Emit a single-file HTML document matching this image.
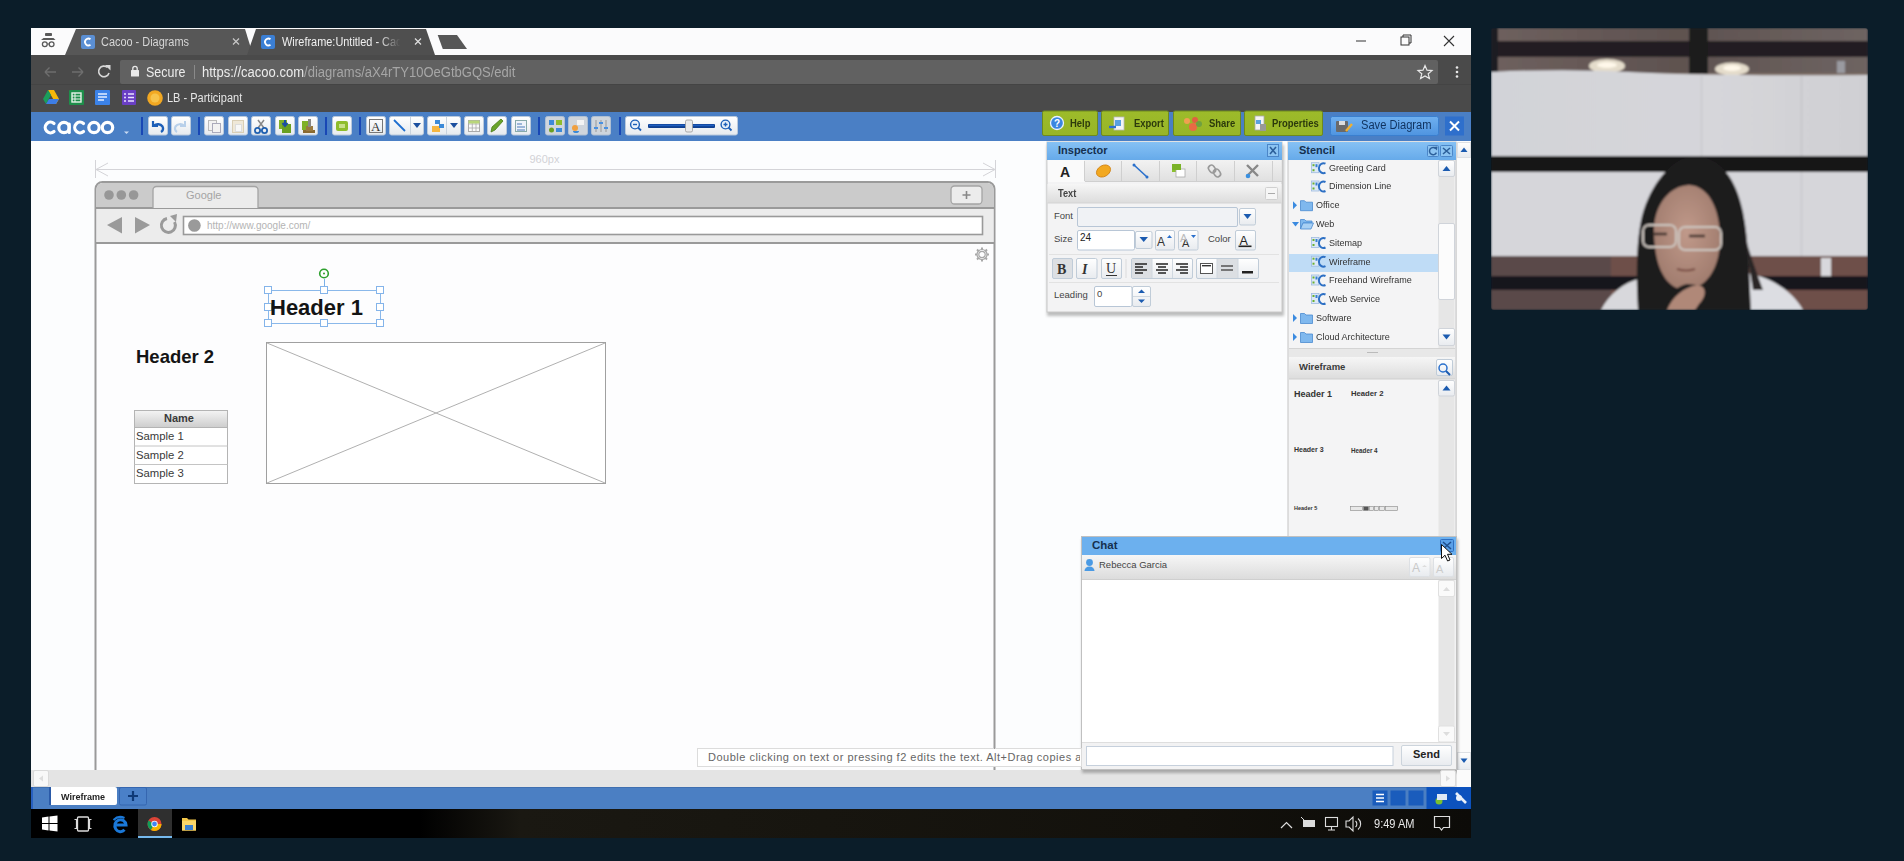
<!DOCTYPE html>
<html><head><meta charset="utf-8">
<style>
*{box-sizing:border-box;margin:0;padding:0}
html,body{width:1904px;height:861px;overflow:hidden;background:#0b1d29;font-family:"Liberation Sans",sans-serif}
.a{position:absolute}
#win{position:absolute;left:31px;top:28px;width:1440px;height:810px;background:#fff;overflow:hidden}
/* coordinates inside #win are page coords minus (31,28) -> I use page coords in a full-page layer */
#L{position:absolute;left:0;top:0;width:1904px;height:861px}
.tb{position:absolute;top:117px;width:19px;height:19px;background:linear-gradient(#fdfdfd,#e4e8ee);border:1px solid #9fb8d8;border-radius:2px}
.sep{position:absolute;top:117px;width:2px;height:19px;background:#1746b0}
.gbtn{position:absolute;top:111px;height:25px;background:#8db52a;border:1px solid #6f9420;border-top:none;border-radius:0 0 2px 2px;color:#1d2a10;font-size:11px;font-weight:bold}
.panelhdr{position:absolute;background:linear-gradient(#7fbef3,#68acec);color:#142a44;font-weight:bold;font-size:11px}
.lbl{position:absolute;font-size:9px;color:#444}
.ibtn{position:absolute;background:linear-gradient(#fff,#e9ecf0);border:1px solid #c4cfdc;border-radius:2px}
.st{position:absolute;font-size:9px;color:#333;white-space:nowrap}
</style></head><body>
<div id="L">
<!-- browser window base -->
<div class="a" style="left:31px;top:28px;width:1440px;height:27px;background:#fbfbfc"></div>
<!-- chrome tabstrip -->
<svg class="a" style="left:31px;top:28px" width="1440" height="84">
 <polygon points="34,27 45,1 214,1 222,27" fill="#575757"/>
 <polygon points="216,27 225,1 395,1 404,27" fill="#4f4f4f"/>
 <polygon points="406.7,7 426,7 436,21 411.8,21" fill="#575757"/>
 <!-- incognito icon -->
 <rect x="14" y="5" width="7" height="3" rx="0.8" fill="#5a5a5a"/>
 <polygon points="12.5,10 22.5,10 24.5,12 10,12" fill="#5a5a5a"/>
 <circle cx="13.8" cy="16.3" r="2.4" fill="none" stroke="#5a5a5a" stroke-width="1.3"/>
 <circle cx="20.6" cy="16.3" r="2.4" fill="none" stroke="#5a5a5a" stroke-width="1.3"/>
 <path d="M16.2,16 h2" stroke="#5a5a5a" stroke-width="1"/>
 <!-- favicons -->
 <rect x="50" y="7" width="14" height="14" rx="2" fill="#5b8fd3"/>
 <path d="M59.5,11.3 A3.4,3.4 0 1 0 59.5,16.7" fill="none" stroke="#fff" stroke-width="1.8"/>
 <rect x="230" y="7" width="14" height="14" rx="2" fill="#3b7fd4"/>
 <path d="M239.5,11.3 A3.4,3.4 0 1 0 239.5,16.7" fill="none" stroke="#fff" stroke-width="1.8"/>
 <!-- close x -->
 <path d="M202,10.5 l6,6 M208,10.5 l-6,6" stroke="#c8c8c8" stroke-width="1.2"/>
 <path d="M384,10.5 l6,6 M390,10.5 l-6,6" stroke="#e0e0e0" stroke-width="1.2"/>
 <!-- window controls -->
 <rect x="1325" y="12.5" width="10" height="1" fill="#333"/>
 <rect x="1370" y="9" width="8" height="8" fill="none" stroke="#333" stroke-width="1"/>
 <path d="M1372,9 v-2 h8 v8 h-2" fill="none" stroke="#333" stroke-width="1"/>
 <path d="M1413,8 l10,10 M1423,8 l-10,10" stroke="#333" stroke-width="1.1"/>
 <!-- toolbar row -->
 <rect x="0" y="27" width="1440" height="57" fill="#4a4a4a"/>
 <rect x="89" y="32" width="1318" height="24" rx="2" fill="#616161"/>
 <rect x="0" y="56" width="1440" height="1" fill="#444"/>
 <!-- back/fwd/reload -->
 <path d="M14,44 h11 M14,44 l4.5,-4.5 M14,44 l4.5,4.5" stroke="#6e6e6e" stroke-width="1.4" fill="none"/>
 <path d="M52,44 h-11 M52,44 l-4.5,-4.5 M52,44 l-4.5,4.5" stroke="#6e6e6e" stroke-width="1.4" fill="none"/>
 <path d="M76.5,39.5 A5.3,5.3 0 1 0 78,45" stroke="#d8d8d8" stroke-width="1.6" fill="none"/>
 <polygon points="74,37 79.5,37 79.5,42.5" fill="#d8d8d8"/>
 <!-- lock -->
 <rect x="100" y="42" width="8" height="6.5" rx="0.5" fill="#e8e8e8"/>
 <path d="M101.8,42.5 v-2 a2.2,2.2 0 0 1 4.4,0 v2" stroke="#e8e8e8" stroke-width="1.3" fill="none"/>
 <rect x="163" y="37" width="1" height="14" fill="#8a8a8a"/>
 <!-- star & menu -->
 <polygon points="1394,37.5 1396,42.2 1401,42.6 1397.2,45.8 1398.4,50.6 1394,48 1389.6,50.6 1390.8,45.8 1387,42.6 1392,42.2" fill="none" stroke="#e8e8e8" stroke-width="1.2"/>
 <circle cx="1426" cy="39.5" r="1.3" fill="#e8e8e8"/><circle cx="1426" cy="44" r="1.3" fill="#e8e8e8"/><circle cx="1426" cy="48.5" r="1.3" fill="#e8e8e8"/>
 <!-- bookmark icons -->
 <polygon points="17,62 23,62 28,71 25,76" fill="#f6b80b"/>
 <polygon points="17,62 12,71 15,76 20,67" fill="#1a9e5b"/>
 <polygon points="15,76 25,76 28,71 18,71" fill="#3d7de6"/>
 <rect x="38" y="62" width="15" height="15" rx="1" fill="#1e8e4a"/>
 <rect x="41" y="65" width="9" height="9" fill="none" stroke="#e8f3ea" stroke-width="1.4"/>
 <path d="M41,68 h9 M41,71 h9 M44,65 v9" stroke="#e8f3ea" stroke-width="1"/>
 <rect x="64" y="62" width="15" height="15" rx="1" fill="#3b82e8"/>
 <path d="M67,66 h9 M67,69 h9 M67,72 h6" stroke="#e3eeff" stroke-width="1.5"/>
 <rect x="91" y="62" width="14" height="15" rx="1" fill="#6a3fc4"/>
 <path d="M97,66 h6 M97,69.5 h6 M97,73 h6" stroke="#e9e2ff" stroke-width="1.5"/>
 <circle cx="94" cy="66" r="1" fill="#e9e2ff"/><circle cx="94" cy="69.5" r="1" fill="#e9e2ff"/><circle cx="94" cy="73" r="1" fill="#e9e2ff"/>
 <circle cx="124" cy="70" r="7.8" fill="#f2a822"/>
 <circle cx="124" cy="70" r="4.5" fill="#f7c34b"/>
</svg>
<div class="a" style="left:101px;top:35px;font-size:12px;color:#d6d6d6;white-space:nowrap;transform:scaleX(0.91);transform-origin:0 0">Cacoo - Diagrams</div>
<div class="a" style="left:282px;top:35px;width:130px;overflow:hidden;font-size:12px;color:#f0f0f0;white-space:nowrap;-webkit-mask-image:linear-gradient(90deg,#000 82%,transparent 100%);transform:scaleX(0.91);transform-origin:0 0">Wireframe:Untitled - Cacoo</div>
<div class="a" style="left:146px;top:64px;font-size:14px;color:#ececec;white-space:nowrap;transform:scaleX(0.89);transform-origin:0 0">Secure</div>
<div class="a" style="left:202px;top:64px;font-size:14px;color:#ececec;white-space:nowrap;transform:scaleX(0.93);transform-origin:0 0">https://cacoo.com<span style="color:#a6a6a6">/diagrams/aX4rTY10OeGtbGQS/edit</span></div>
<div class="a" style="left:167px;top:91px;font-size:12.5px;color:#e6e6e6;white-space:nowrap;transform:scaleX(0.88);transform-origin:0 0">LB - Participant</div>

<div class="a" style="left:31px;top:112px;width:1440px;height:29px;background:#4a7fc5"></div>
<div class="a" style="left:31px;top:141px;width:1440px;height:629px;background:#fcfdfe"></div>
<div class="a" style="left:31px;top:770px;width:1440px;height:17px;background:#e4e4e4"></div>
<div class="a" style="left:31px;top:787px;width:1440px;height:22px;background:#4b7fc3"></div>
<div class="a" style="left:31px;top:809px;width:1440px;height:29px;background:#050505"></div>


<!-- canvas content -->
<svg class="a" style="left:0;top:0" width="1904" height="861">
 <!-- dimension line -->
 <g stroke="#d4d4d8" stroke-width="1" fill="none">
  <path d="M95.5,160 v18 M995.5,160 v18 M96,169.5 h898"/>
  <path d="M108,163 l-12,6.5 l12,6.5 M983,163 l12,6.5 l-12,6.5"/>
 </g>
 
 <text x="529.5" y="163" font-family="Liberation Sans" font-size="11" fill="#d2d2d6">960px</text>
 <!-- mock browser -->
 <path d="M95.5,770 V189 a7,7 0 0 1 7,-7 H987.5 a7,7 0 0 1 7,7 V770" fill="#fdfdfe" stroke="#9a9a9a" stroke-width="2"/>
 <path d="M96.5,207 V189 a6,6 0 0 1 6,-6 H987.5 a6,6 0 0 1 6,6 V207 z" fill="#cbcbcb"/>
 <rect x="96.5" y="208" width="897" height="35" fill="#ececec"/>
 <rect x="96" y="207" width="898" height="2" fill="#9a9a9a"/>
 <rect x="96" y="242" width="898" height="2" fill="#9a9a9a"/>
 <circle cx="109" cy="195" r="4.8" fill="#979797"/><circle cx="121.3" cy="195" r="4.8" fill="#979797"/><circle cx="133.6" cy="195" r="4.8" fill="#979797"/>
 <path d="M153,208 V190 a3.5,3.5 0 0 1 3.5,-3.5 H254.5 a3.5,3.5 0 0 1 3.5,3.5 V208" fill="#ececec" stroke="#a4a4a4" stroke-width="1.3"/>
 <rect x="951" y="186" width="31" height="18" rx="3.5" fill="#ececec" stroke="#a4a4a4" stroke-width="1.3"/>
 <path d="M966.5,191 v8 M962.5,195 h8" stroke="#888" stroke-width="1.6"/>
 <polygon points="107,225 122,217 122,233.5" fill="#9a9a9a"/>
 <polygon points="135,217 150,225 135,233.5" fill="#9a9a9a"/>
 <path d="M174.5,222 A7,7 0 1 1 167,218.5" fill="none" stroke="#9a9a9a" stroke-width="3"/>
 <polygon points="170,216 177,214 176,222" fill="#9a9a9a"/>
 <rect x="183.5" y="216.5" width="799" height="18" fill="#fff" stroke="#9a9a9a" stroke-width="1.6"/>
 <circle cx="194.4" cy="225.5" r="6.3" fill="#9a9a9a"/>
 <text x="207" y="229" font-family="Liberation Sans" font-size="10" fill="#b4b4b4">http://www.google.com/</text>
 <text x="186" y="199" font-family="Liberation Sans" font-size="11" fill="#a4a4a4">Google</text>
 <!-- gear -->
 <g transform="translate(982,254.5)" fill="none" stroke="#a8a8a8" stroke-width="1.2">
  <circle r="3.2"/>
  <path d="M0,-7 v2.2 M0,7 v-2.2 M-7,0 h2.2 M7,0 h-2.2 M-5,-5 l1.6,1.6 M5,5 l-1.6,-1.6 M-5,5 l1.6,-1.6 M5,-5 l-1.6,1.6" stroke-width="2"/>
  <circle r="5"/>
 </g>
 <!-- image placeholder -->
 <rect x="266.5" y="342.5" width="339" height="141" fill="#fff" stroke="#a0a0a0" stroke-width="1"/>
 <path d="M267,343 L605,483 M605,343 L267,483" stroke="#b0b0b0" stroke-width="1"/>
 <!-- table -->
 <defs><linearGradient id="th" x1="0" y1="0" x2="0" y2="1"><stop offset="0" stop-color="#f4f4f4"/><stop offset="1" stop-color="#cdcdcd"/></linearGradient></defs>
 <rect x="134.5" y="410.5" width="93" height="17" fill="url(#th)" stroke="#b4b4b4"/>
 <rect x="134.5" y="427.5" width="93" height="56" fill="#fff" stroke="#b4b4b4"/>
 <path d="M134.5,446 h93 M134.5,464.5 h93" stroke="#c4c4c4" stroke-width="1"/>
 <!-- selection -->
 <path d="M324.5,279 v11" stroke="#7ab0e8" stroke-width="1"/>
 <circle cx="324" cy="273.5" r="4.3" fill="#fff" stroke="#2ea02e" stroke-width="1.6"/>
 <circle cx="324" cy="273.5" r="1" fill="#2ea02e"/>
 <rect x="268.5" y="290.5" width="112" height="33" fill="none" stroke="#8ab8ea" stroke-width="1"/>
 <g fill="#fff" stroke="#84b4ea" stroke-width="1">
  <rect x="264.5" y="286.5" width="7" height="7"/><rect x="320.5" y="286.5" width="7" height="7"/><rect x="376.5" y="286.5" width="7" height="7"/>
  <rect x="264.5" y="303.5" width="7" height="7"/><rect x="376.5" y="303.5" width="7" height="7"/>
  <rect x="264.5" y="319.5" width="7" height="7"/><rect x="320.5" y="319.5" width="7" height="7"/><rect x="376.5" y="319.5" width="7" height="7"/>
 </g>
</svg>
<div class="a" style="left:270px;top:295px;font-size:22px;font-weight:bold;color:#141414;white-space:nowrap">Header 1</div>
<div class="a" style="left:136px;top:346px;font-size:18.5px;font-weight:bold;color:#141414;white-space:nowrap">Header 2</div>
<div class="a" style="left:164px;top:412px;font-size:11px;font-weight:bold;color:#3a3a3a">Name</div>
<div class="a" style="left:136px;top:430px;font-size:11.3px;color:#3a3a3a">Sample 1</div>
<div class="a" style="left:136px;top:449px;font-size:11.3px;color:#3a3a3a">Sample 2</div>
<div class="a" style="left:136px;top:467px;font-size:11.3px;color:#3a3a3a">Sample 3</div>

<!-- panels -->
<svg class="a" style="left:0;top:0" width="1904" height="861">
 <defs>
  <linearGradient id="ph" x1="0" y1="0" x2="0" y2="1"><stop offset="0" stop-color="#86c1f4"/><stop offset="1" stop-color="#66aaea"/></linearGradient>
  <linearGradient id="sec" x1="0" y1="0" x2="0" y2="1"><stop offset="0" stop-color="#f6f6f6"/><stop offset="1" stop-color="#dcdcdc"/></linearGradient>
  <linearGradient id="btn" x1="0" y1="0" x2="0" y2="1"><stop offset="0" stop-color="#ffffff"/><stop offset="1" stop-color="#e8ebef"/></linearGradient>
  <linearGradient id="tab" x1="0" y1="0" x2="0" y2="1"><stop offset="0" stop-color="#f2f2f2"/><stop offset="1" stop-color="#e0e0e0"/></linearGradient>
  <filter id="sh" x="-5%" y="-5%" width="110%" height="115%"><feGaussianBlur stdDeviation="1.5"/></filter>
 </defs>
 <!-- ===== Inspector ===== -->
 <rect x="1047" y="145" width="237" height="171" fill="#888" opacity="0.55" filter="url(#sh)"/>
 <rect x="1047" y="142" width="235" height="170" fill="#f3f3f4" stroke="#c8c8c8" stroke-width="1"/>
 <rect x="1047" y="142" width="235" height="18" fill="url(#ph)"/>
 <rect x="1267.5" y="144.5" width="11" height="12" fill="#8cc4f2" stroke="#4b86c8" stroke-width="1"/>
 <path d="M1270,147 l6,7 M1276,147 l-6,7" stroke="#2c5f9a" stroke-width="1.6"/>
 <!-- tabs -->
 <rect x="1047.5" y="160" width="234" height="21" fill="url(#tab)"/>
 <rect x="1048" y="160" width="36" height="22" fill="#fafafa"/>
 <g fill="#cfcfcf"><rect x="1084" y="161" width="1" height="20"/><rect x="1121" y="161" width="1" height="20"/><rect x="1159" y="161" width="1" height="20"/><rect x="1196" y="161" width="1" height="20"/><rect x="1234" y="161" width="1" height="20"/><rect x="1272" y="161" width="1" height="20"/></g>
 <rect x="1085" y="181" width="197" height="1" fill="#cfcfcf"/>
 <text x="1060" y="177" font-family="Liberation Sans" font-weight="bold" font-size="14" fill="#222">A</text>
 <ellipse cx="1103.5" cy="171" rx="7.5" ry="5.5" transform="rotate(-30 1103.5 171)" fill="#f2a820" stroke="#d08010" stroke-width="0.8"/>
 <path d="M1134,165 l13,12" stroke="#2a70cc" stroke-width="1.6"/>
 <circle cx="1134" cy="165" r="1.5" fill="#2a70cc"/><circle cx="1147" cy="177" r="1.5" fill="#2a70cc"/>
 <rect x="1172" y="164" width="9" height="8" fill="#8cc030"/>
 <rect x="1176" y="169" width="9" height="8" fill="#fff" stroke="#aaa" stroke-width="0.8"/>
 <rect x="1172" y="164" width="9" height="6" fill="#7ab228"/>
 <g fill="none" stroke="#9a9a9a" stroke-width="1.6"><rect x="1209" y="165" width="6" height="8" rx="3" transform="rotate(-35 1212 169)"/><rect x="1214" y="169" width="6" height="8" rx="3" transform="rotate(-35 1217 173)"/></g>
 <path d="M1247,165 l11,11 M1258,165 l-11,11" stroke="#888" stroke-width="2.4"/>
 <circle cx="1248" cy="176" r="2.3" fill="#3a90e0"/>
 <!-- section Text -->
 <rect x="1047.5" y="184" width="234" height="19" fill="url(#sec)"/>
 <rect x="1047.5" y="202.5" width="234" height="1" fill="#d4d4d4"/>
 <rect x="1265.5" y="187.5" width="12" height="12" rx="1" fill="#f6f6f6" stroke="#d0d0d0"/>
 <rect x="1268" y="193" width="7" height="1" fill="#aaa"/>
 <!-- inputs -->
 <rect x="1077.5" y="207.5" width="160" height="19" rx="1.5" fill="#f0f2f5" stroke="#b8c6d6"/>
 <rect x="1239.5" y="208.5" width="16" height="16.5" rx="1.5" fill="url(#btn)" stroke="#c0ccd8"/>
 <polygon points="1243.5,214 1251.5,214 1247.5,219" fill="#1b5bb0"/>
 <rect x="1077.5" y="230.5" width="57" height="19.5" rx="1.5" fill="#fff" stroke="#b8c6d6"/>
 <rect x="1135.5" y="231.5" width="16.5" height="17" rx="1.5" fill="url(#btn)" stroke="#c0ccd8"/>
 <polygon points="1139.5,237 1148,237 1143.7,242" fill="#1b5bb0"/>
 <rect x="1155.5" y="230.5" width="19" height="19.5" rx="1.5" fill="url(#btn)" stroke="#c0ccd8"/>
 <rect x="1178.5" y="230.5" width="19.5" height="19.5" rx="1.5" fill="url(#btn)" stroke="#c0ccd8"/>
 <text x="1157" y="246" font-family="Liberation Sans" font-size="12" fill="#333">A</text>
 <polygon points="1167,238 1172,238 1169.5,235" fill="#2a70cc"/>
 <text x="1182" y="247" font-family="Liberation Sans" font-size="11" fill="#333">A</text>
 <text x="1180" y="242" font-family="Liberation Sans" font-size="11" fill="#bbb">A</text>
 <polygon points="1191,235 1196,235 1193.5,238" fill="#2a70cc"/>
 <rect x="1235.5" y="230.5" width="20" height="19.5" rx="1.5" fill="url(#btn)" stroke="#c0ccd8"/>
 <text x="1239.5" y="245" font-family="Liberation Sans" font-size="12.5" fill="#222">A</text>
 <rect x="1238.5" y="245.5" width="13" height="1.6" fill="#222"/>
 <rect x="1049" y="254" width="230" height="1" fill="#e2e2e2"/>
 <!-- format row -->
 <rect x="1052.5" y="258.5" width="20" height="20" rx="1.5" fill="#dcdfe3" stroke="#c0ccd8"/>
 <rect x="1076.5" y="258.5" width="20.5" height="20" rx="1.5" fill="url(#btn)" stroke="#c0ccd8"/>
 <rect x="1101.5" y="258.5" width="20" height="20" rx="1.5" fill="url(#btn)" stroke="#c0ccd8"/>
 <text x="1057" y="274" font-family="Liberation Serif" font-weight="bold" font-size="14" fill="#333">B</text>
 <text x="1082" y="274" font-family="Liberation Serif" font-style="italic" font-weight="bold" font-size="14" fill="#333">I</text>
 <text x="1106" y="273" font-family="Liberation Serif" font-size="14" fill="#333">U</text>
 <rect x="1106" y="275" width="11" height="1" fill="#333"/>
 <rect x="1125.5" y="259" width="1" height="19" fill="#dcdcdc"/>
 <rect x="1131.5" y="258.5" width="61" height="20" rx="1.5" fill="url(#btn)" stroke="#c0ccd8"/>
 <rect x="1132" y="259" width="20" height="19" fill="#dcdfe3"/>
 <rect x="1151.5" y="259" width="1" height="19" fill="#d0d8e0"/><rect x="1172" y="259" width="1" height="19" fill="#d0d8e0"/>
 <path d="M1135,264 h12 M1135,267 h8 M1135,270 h12 M1135,273 h8" stroke="#222" stroke-width="1.4"/>
 <path d="M1156,264 h12 M1158,267 h8 M1156,270 h12 M1158,273 h8" stroke="#222" stroke-width="1.4"/>
 <path d="M1176,264 h12 M1180,267 h8 M1176,270 h12 M1180,273 h8" stroke="#222" stroke-width="1.4"/>
 <rect x="1196.5" y="258.5" width="62" height="20" rx="1.5" fill="url(#btn)" stroke="#c0ccd8"/>
 <rect x="1217" y="259" width="21" height="19" fill="#dcdfe3"/>
 <rect x="1216.5" y="259" width="1" height="19" fill="#d0d8e0"/><rect x="1237.5" y="259" width="1" height="19" fill="#d0d8e0"/>
 <rect x="1200.5" y="263.5" width="12" height="10" fill="#fff" stroke="#555"/>
 <rect x="1202" y="265" width="9" height="1.4" fill="#333"/>
 <path d="M1221,266 h12 M1221,270 h12" stroke="#555" stroke-width="1.3"/>
 <rect x="1242" y="271" width="11" height="2.5" fill="#222"/>
 <rect x="1049" y="282" width="230" height="1" fill="#e2e2e2"/>
 <!-- leading -->
 <rect x="1094.5" y="286.5" width="37.5" height="20" rx="1.5" fill="#fff" stroke="#b8c6d6"/>
 <rect x="1132.5" y="286.5" width="18" height="20" rx="1.5" fill="url(#btn)" stroke="#c0ccd8"/>
 <rect x="1133" y="296" width="17" height="1" fill="#d0d8e0"/>
 <polygon points="1138,293 1145,293 1141.5,289.5" fill="#1b5bb0"/>
 <polygon points="1138,299.5 1145,299.5 1141.5,303" fill="#1b5bb0"/>

 <!-- ===== Stencil ===== -->
 <rect x="1288" y="142" width="168" height="395" fill="#f4f4f5" stroke="#c4c4c4"/>
 <rect x="1288" y="142" width="168" height="18" fill="url(#ph)"/>
 <rect x="1427.5" y="145.5" width="11" height="11" rx="1" fill="#8cc4f2" stroke="#4b86c8"/>
 <path d="M1435.8,148.8 a3.6,3.6 0 1 0 0.6,3.8" fill="none" stroke="#2c5f9a" stroke-width="1.5"/><polygon points="1433.5,147 1437.5,146.5 1437,150.5" fill="#2c5f9a"/>
 <rect x="1440.5" y="145.5" width="12" height="11" rx="1" fill="#8cc4f2" stroke="#4b86c8"/>
 <path d="M1443,148 l7,6 M1450,148 l-7,6" stroke="#2c5f9a" stroke-width="1.6"/>
 <rect x="1289" y="254" width="149.5" height="18" fill="#bfdcf6"/>
 <!-- stencil scrollbar -->
 <rect x="1438.5" y="160" width="16" height="188" fill="#e6e6e6"/>
 <rect x="1438.5" y="160.5" width="16" height="16" rx="1.5" fill="url(#btn)" stroke="#d0d4da"/>
 <polygon points="1442.5,171 1450.5,171 1446.5,166" fill="#1b5bb0"/>
 <rect x="1438.5" y="223.5" width="16" height="76" rx="1.5" fill="#fcfcfc" stroke="#d0d4da"/>
 <rect x="1438.5" y="328.5" width="16" height="17" rx="1.5" fill="url(#btn)" stroke="#d0d4da"/>
 <polygon points="1442.5,334.5 1450.5,334.5 1446.5,339.5" fill="#1b5bb0"/>
 <rect x="1289" y="348" width="166" height="1" fill="#d4d4d4"/>
 <rect x="1289" y="349" width="166" height="8" fill="#e8e8e8"/>
 <rect x="1367" y="352" width="11" height="1" fill="#bbb"/>
 <!-- wireframe header -->
 <rect x="1289" y="357" width="166" height="22" fill="url(#sec)"/>
 <rect x="1289" y="378.5" width="166" height="1" fill="#d0d0d0"/>
 <rect x="1436.5" y="359.5" width="16" height="16" rx="1.5" fill="url(#btn)" stroke="#c0ccd8"/>
 <circle cx="1443" cy="368" r="4" fill="none" stroke="#2a70cc" stroke-width="1.5"/>
 <path d="M1446,371 l4,4" stroke="#1b5bb0" stroke-width="2"/>
 <rect x="1438.5" y="380" width="16" height="157" fill="#e6e6e6"/>
 <rect x="1438.5" y="380.5" width="16" height="15.5" rx="1.5" fill="url(#btn)" stroke="#d0d4da"/>
 <polygon points="1442.5,390.5 1450.5,390.5 1446.5,385.5" fill="#1b5bb0"/>
 <!-- pagination thumbnail -->
 <g fill="#e8e8e8" stroke="#888" stroke-width="0.6"><rect x="1350.5" y="506.5" width="12" height="4"/><rect x="1363.5" y="506.5" width="5" height="4" fill="#555"/><rect x="1369.5" y="506.5" width="4" height="4"/><rect x="1374.5" y="506.5" width="4" height="4"/><rect x="1379.5" y="506.5" width="5" height="4"/><rect x="1385.5" y="506.5" width="12" height="4"/></g>
 <!-- outer right scrollbar -->
 <rect x="1457" y="142" width="14" height="628" fill="#fbfbfb"/>
 <rect x="1456" y="142" width="1" height="628" fill="#d8d8d8"/>
 <rect x="1457.5" y="142.5" width="13" height="15" fill="url(#btn)" stroke="#dde0e4"/>
 <polygon points="1460.5,152 1467.5,152 1464,147.5" fill="#1b5bb0"/>
 <rect x="1457.5" y="752.5" width="13" height="17" fill="url(#btn)" stroke="#dde0e4"/>
 <polygon points="1460.5,758.5 1467.5,758.5 1464,763" fill="#1b5bb0"/>

 <!-- ===== Chat ===== -->
 <rect x="1082" y="539" width="376" height="234" fill="#777" opacity="0.55" filter="url(#sh)"/>
 <rect x="1081.5" y="536.5" width="375" height="233" fill="#f2f2f3" stroke="#c0c0c0"/>
 <rect x="1082" y="537" width="374" height="18" fill="#6cb0ee"/>
 <rect x="1440.5" y="539.5" width="13" height="12" rx="1" fill="#5aa0e8" stroke="#2f6fc0"/>
 <path d="M1443,542 l8,7 M1451,542 l-8,7" stroke="#1f4f8f" stroke-width="1.6"/>
 <rect x="1082" y="555" width="374" height="24" fill="url(#sec)"/>
 <rect x="1082" y="579" width="374" height="1" fill="#cfcfcf"/>
 <rect x="1409.5" y="557.5" width="20.5" height="19" rx="1.5" fill="url(#btn)" stroke="#dde0e4"/>
 <rect x="1433.5" y="557.5" width="20" height="19" rx="1.5" fill="url(#btn)" stroke="#dde0e4"/>
 <text x="1412" y="572" font-family="Liberation Sans" font-size="12" fill="#c8c8c8">A</text>
 <polygon points="1422,567 1427,567 1424.5,565" fill="#ddd"/>
 <text x="1436" y="573" font-family="Liberation Sans" font-size="11" fill="#ccc">A</text>
 <circle cx="1089.5" cy="562.5" r="3.4" fill="#4a9ae4"/>
 <path d="M1084.5,571 a5,4.5 0 0 1 10,0 z" fill="#4a9ae4"/>
 <rect x="1082" y="580" width="357" height="162" fill="#fff"/>
 <rect x="1438.5" y="580" width="16" height="162" fill="#e6e6e6"/>
 <rect x="1438.5" y="580.5" width="16" height="16" rx="1.5" fill="#fafafa" stroke="#e0e0e0"/>
 <polygon points="1443,591 1450,591 1446.5,587" fill="#ddd"/>
 <rect x="1438.5" y="726" width="16" height="16" rx="1.5" fill="#fafafa" stroke="#e0e0e0"/>
 <polygon points="1443,732 1450,732 1446.5,736" fill="#ddd"/>
 <rect x="1082" y="742" width="374" height="1" fill="#dedede"/>
 <rect x="1086.5" y="746.5" width="306.5" height="19" fill="#fff" stroke="#c6d0dc"/>
 <rect x="1401.5" y="745.5" width="50" height="20" rx="1.5" fill="url(#btn)" stroke="#ccd4dc"/>

 <!-- tooltip -->
 <rect x="697.5" y="748.5" width="384" height="18" fill="#fff" stroke="#dcdcdc"/>
 <rect x="994" y="748" width="1" height="1" fill="#9a9a9a"/>
 <!-- canvas bottom scrollbar buttons -->
 <rect x="33.5" y="770.5" width="15" height="16" rx="1.5" fill="#f8f8f8" stroke="#dadada"/>
 <polygon points="43,775.5 43,781.5 39,778.5" fill="#ddd"/>
 <rect x="1440.5" y="770.5" width="15" height="16" rx="1.5" fill="#f8f8f8" stroke="#dadada"/>
 <polygon points="1446,775.5 1446,781.5 1450,778.5" fill="#ddd"/>
 <rect x="1457" y="770" width="14" height="17" fill="#fbfbfb"/>
</svg>
<div class="a" style="left:1058px;top:144px;font-size:11px;font-weight:bold;color:#15304f">Inspector</div>
<div class="a" style="left:1058px;top:188px;font-size:10px;font-weight:bold;color:#444;transform:scaleX(0.92);transform-origin:0 0">Text</div>
<div class="a" style="left:1054px;top:210px;font-size:9.5px;color:#444">Font</div>
<div class="a" style="left:1054px;top:233px;font-size:9.5px;color:#444">Size</div>
<div class="a" style="left:1080px;top:232px;font-size:10px;color:#222">24</div>
<div class="a" style="left:1208px;top:233px;font-size:9.5px;color:#444">Color</div>
<div class="a" style="left:1054px;top:289px;font-size:9.5px;color:#444">Leading</div>
<div class="a" style="left:1097px;top:288px;font-size:9.5px;color:#444">0</div>
<div class="a" style="left:1299px;top:144px;font-size:11px;font-weight:bold;color:#15304f">Stencil</div>
<div class="a" style="left:1299px;top:361px;font-size:9.5px;font-weight:bold;color:#3a3a3a">Wireframe</div>
<div class="a" style="left:1092px;top:539px;font-size:11.5px;font-weight:bold;color:#15304f">Chat</div>
<div class="a" style="left:1099px;top:559px;font-size:9.5px;color:#444">Rebecca Garcia</div>
<div class="a" style="left:1413px;top:748px;font-size:11px;font-weight:bold;color:#222">Send</div>
<div class="a" style="left:708px;top:751px;font-size:11px;color:#666;white-space:nowrap;width:372px;overflow:hidden;letter-spacing:0.5px">Double clicking on text or pressing f2 edits the text. Alt+Drag copies a shape.</div>
<div class="a" style="left:1294px;top:389px;font-size:9px;font-weight:bold;color:#333">Header 1</div>
<div class="a" style="left:1351px;top:389px;font-size:7.7px;font-weight:bold;color:#333">Header 2</div>
<div class="a" style="left:1294px;top:446px;font-size:7px;font-weight:bold;color:#333">Header 3</div>
<div class="a" style="left:1351px;top:447px;font-size:6.3px;font-weight:bold;color:#333">Header 4</div>
<div class="a" style="left:1294px;top:505px;font-size:5.5px;font-weight:bold;color:#333">Header 5</div>

<!-- stencil list -->
<svg class="a" style="left:0;top:0" width="1904" height="861">
<rect x="1311.5" y="162.7" width="7.5" height="10" fill="#dce8f6" stroke="#9dbbe0" stroke-width="0.8"/>
<rect x="1312.5" y="164.2" width="2" height="2" fill="#6ab030"/><rect x="1312.5" y="169.2" width="2" height="2" fill="#6ab030"/><rect x="1315.5" y="164.2" width="2" height="3" fill="#3a80d0"/>
<path d="M1325.5,163.7 a4.6,5 0 1 0 0,9" fill="none" stroke="#2c6fc4" stroke-width="2"/>
<rect x="1311.5" y="181.0" width="7.5" height="10" fill="#dce8f6" stroke="#9dbbe0" stroke-width="0.8"/>
<rect x="1312.5" y="182.5" width="2" height="2" fill="#6ab030"/><rect x="1312.5" y="187.5" width="2" height="2" fill="#6ab030"/><rect x="1315.5" y="182.5" width="2" height="3" fill="#3a80d0"/>
<path d="M1325.5,182.0 a4.6,5 0 1 0 0,9" fill="none" stroke="#2c6fc4" stroke-width="2"/>
<polygon points="1293,201.2 1297,205.2 1293,209.2" fill="#3a8ae0"/>
<path d="M1300.5,200.7 h4 l1.5,1.5 h6.5 v8.5 h-12 z" fill="#7fb8ee" stroke="#4a8ad0" stroke-width="0.8"/>
<polygon points="1292,222 1299,222 1295.5,226.5" fill="#3a8ae0"/>
<path d="M1300.5,219.5 h4 l1.5,1.5 h6 v2 h-9 l-2.5,6 z" fill="#7fb8ee" stroke="#4a8ad0" stroke-width="0.8"/><path d="M1303,223 h10.5 l-2.5,6 h-10.5 z" fill="#a8d0f4" stroke="#4a8ad0" stroke-width="0.8"/>
<rect x="1311.5" y="237.5" width="7.5" height="10" fill="#dce8f6" stroke="#9dbbe0" stroke-width="0.8"/>
<rect x="1312.5" y="239" width="2" height="2" fill="#6ab030"/><rect x="1312.5" y="244" width="2" height="2" fill="#6ab030"/><rect x="1315.5" y="239" width="2" height="3" fill="#3a80d0"/>
<path d="M1325.5,238.5 a4.6,5 0 1 0 0,9" fill="none" stroke="#2c6fc4" stroke-width="2"/>
<rect x="1311.5" y="256.2" width="7.5" height="10" fill="#dce8f6" stroke="#9dbbe0" stroke-width="0.8"/>
<rect x="1312.5" y="257.7" width="2" height="2" fill="#6ab030"/><rect x="1312.5" y="262.7" width="2" height="2" fill="#6ab030"/><rect x="1315.5" y="257.7" width="2" height="3" fill="#3a80d0"/>
<path d="M1325.5,257.2 a4.6,5 0 1 0 0,9" fill="none" stroke="#2c6fc4" stroke-width="2"/>
<rect x="1311.5" y="275.0" width="7.5" height="10" fill="#dce8f6" stroke="#9dbbe0" stroke-width="0.8"/>
<rect x="1312.5" y="276.5" width="2" height="2" fill="#6ab030"/><rect x="1312.5" y="281.5" width="2" height="2" fill="#6ab030"/><rect x="1315.5" y="276.5" width="2" height="3" fill="#3a80d0"/>
<path d="M1325.5,276.0 a4.6,5 0 1 0 0,9" fill="none" stroke="#2c6fc4" stroke-width="2"/>
<rect x="1311.5" y="293.5" width="7.5" height="10" fill="#dce8f6" stroke="#9dbbe0" stroke-width="0.8"/>
<rect x="1312.5" y="295" width="2" height="2" fill="#6ab030"/><rect x="1312.5" y="300" width="2" height="2" fill="#6ab030"/><rect x="1315.5" y="295" width="2" height="3" fill="#3a80d0"/>
<path d="M1325.5,294.5 a4.6,5 0 1 0 0,9" fill="none" stroke="#2c6fc4" stroke-width="2"/>
<polygon points="1293,314 1297,318 1293,322" fill="#3a8ae0"/>
<path d="M1300.5,313.5 h4 l1.5,1.5 h6.5 v8.5 h-12 z" fill="#7fb8ee" stroke="#4a8ad0" stroke-width="0.8"/>
<polygon points="1293,333 1297,337 1293,341" fill="#3a8ae0"/>
<path d="M1300.5,332.5 h4 l1.5,1.5 h6.5 v8.5 h-12 z" fill="#7fb8ee" stroke="#4a8ad0" stroke-width="0.8"/>
</svg>
<div class="a" style="left:1329px;top:162px;font-size:9.5px;color:#333;white-space:nowrap;transform:scaleX(0.95);transform-origin:0 0">Greeting Card</div>
<div class="a" style="left:1329px;top:180px;font-size:9.5px;color:#333;white-space:nowrap;transform:scaleX(0.95);transform-origin:0 0">Dimension Line</div>
<div class="a" style="left:1316px;top:199px;font-size:9.5px;color:#333;white-space:nowrap;transform:scaleX(0.95);transform-origin:0 0">Office</div>
<div class="a" style="left:1316px;top:218px;font-size:9.5px;color:#333;white-space:nowrap;transform:scaleX(0.95);transform-origin:0 0">Web</div>
<div class="a" style="left:1329px;top:237px;font-size:9.5px;color:#333;white-space:nowrap;transform:scaleX(0.95);transform-origin:0 0">Sitemap</div>
<div class="a" style="left:1329px;top:256px;font-size:9.5px;color:#333;white-space:nowrap;transform:scaleX(0.95);transform-origin:0 0">Wireframe</div>
<div class="a" style="left:1329px;top:274px;font-size:9.5px;color:#333;white-space:nowrap;transform:scaleX(0.95);transform-origin:0 0">Freehand Wireframe</div>
<div class="a" style="left:1329px;top:293px;font-size:9.5px;color:#333;white-space:nowrap;transform:scaleX(0.95);transform-origin:0 0">Web Service</div>
<div class="a" style="left:1316px;top:312px;font-size:9.5px;color:#333;white-space:nowrap;transform:scaleX(0.95);transform-origin:0 0">Software</div>
<div class="a" style="left:1316px;top:331px;font-size:9.5px;color:#333;white-space:nowrap;transform:scaleX(0.95);transform-origin:0 0">Cloud Architecture</div>

<!-- bottom bars -->
<svg class="a" style="left:0;top:0" width="1904" height="861">
 <rect x="31" y="787" width="1440" height="1" fill="#3f6fb0"/>
 <rect x="49" y="787" width="68" height="18" rx="2" fill="#fff"/>
 <rect x="49" y="787" width="2" height="18" fill="#2a5aa8"/>
 <rect x="119.5" y="787.5" width="27" height="17.5" rx="1.5" fill="#4a80c8" stroke="#3566b0"/>
 <path d="M133,791 v10 M128,796 h10" stroke="#0f3a78" stroke-width="2.2"/>
 <rect x="31" y="787" width="2" height="22" fill="#2860c0"/>
 <!-- right bottom buttons -->
 <rect x="1372.5" y="790.5" width="15" height="15" fill="#1a5cbc"/>
 <path d="M1376,794.5 h8 M1376,798 h8 M1376,801.5 h8" stroke="#fff" stroke-width="1.4"/>
 <rect x="1390.5" y="790.5" width="15" height="15" fill="#1a5cbc"/>
 <rect x="1408.5" y="790.5" width="15" height="15" fill="#1a5cbc"/>
 <rect x="1426.5" y="787" width="44.5" height="22" fill="#0c52be"/>
 <circle cx="1439" cy="801" r="3.5" fill="#7ac030"/>
 <rect x="1437" y="794" width="10" height="6" fill="#dfe8f4"/>
 <path d="M1456,793 l10,10" stroke="#e8f0fa" stroke-width="2.6"/>
 <circle cx="1459" cy="798" r="3" fill="#e8f0fa"/>
 <!-- taskbar -->
 <defs><linearGradient id="tbg" x1="0" y1="0" x2="1" y2="0"><stop offset="0" stop-color="#000"/><stop offset="0.27" stop-color="#000"/><stop offset="0.34" stop-color="#1a1812"/><stop offset="0.55" stop-color="#17150f"/><stop offset="0.8" stop-color="#13110c"/><stop offset="1" stop-color="#0c0b08"/></linearGradient></defs>
 <rect x="31" y="809" width="1440" height="29" fill="url(#tbg)"/>
 <g fill="#fff">
  <polygon points="42,817.5 48.5,816.6 48.5,823 42,823"/>
  <polygon points="49.5,816.5 57.5,815.5 57.5,823 49.5,823"/>
  <polygon points="42,824 48.5,824 48.5,830.5 42,829.6"/>
  <polygon points="49.5,824 57.5,824 57.5,831.5 49.5,830.6"/>
 </g>
 <rect x="77.5" y="817" width="11" height="14" rx="1" fill="none" stroke="#dcdcdc" stroke-width="1.3"/>
 <path d="M74.5,819.5 h2 v9 h-2 M91.5,819.5 h-2 v9 h2" fill="none" stroke="#dcdcdc" stroke-width="1.2"/>
 <path d="M115.5,825 h10.5 a5.6,6 0 1 0 -1.5,4.8" fill="none" stroke="#1a78d8" stroke-width="3"/><path d="M113.5,820 q5,-5 11,-2" fill="none" stroke="#1a78d8" stroke-width="2"/>
 <rect x="138" y="809" width="34" height="29" fill="#2f2f2f"/>
 <rect x="138" y="836" width="34" height="2" fill="#76b9ed"/>
 <circle cx="154.5" cy="824" r="7" fill="#db4437"/>
 <path d="M154.5,824 L148.4,820.5 A7,7 0 0 0 151,830 z" fill="#0f9d58"/>
 <path d="M154.5,824 L151,830 A7,7 0 0 0 161.5,824 z" fill="#f4b400"/>
 <circle cx="154.5" cy="824" r="3.2" fill="#fff"/><circle cx="154.5" cy="824" r="2.4" fill="#4285f4"/>
 <path d="M182,818 h5 l1.5,1.5 h7.5 v11 h-14 z" fill="#f4c84a"/>
 <rect x="182" y="821" width="14" height="9.5" fill="#fad66a"/>
 <rect x="185" y="825" width="8" height="5" fill="#3a7fcf"/>
 <!-- tray -->
 <path d="M1281,828 l5.5,-5.5 l5.5,5.5" fill="none" stroke="#ddd" stroke-width="1.2"/>
 <rect x="1303" y="820" width="12" height="7" fill="#ddd"/>
 <path d="M1301,817 l3,3" stroke="#ddd" stroke-width="1"/>
 <rect x="1325.5" y="817.5" width="12" height="9" fill="none" stroke="#ddd" stroke-width="1.1"/>
 <path d="M1331.5,826.5 v3 M1328,830 h7" stroke="#ddd" stroke-width="1.1"/>
 <path d="M1346,821 h3 l4,-4 v14 l-4,-4 h-3 z" fill="none" stroke="#ddd" stroke-width="1.1"/>
 <path d="M1355.5,821 a4,4 0 0 1 0,6 M1358,818.5 a7,7 0 0 1 0,11" fill="none" stroke="#ddd" stroke-width="1.1"/>
 <path d="M1434.5,816.5 h15 v11 h-6 l-2,2.5 l-2,-2.5 h-5 z" fill="none" stroke="#ddd" stroke-width="1.2"/>
</svg>
<div class="a" style="left:61px;top:791px;font-size:9.5px;font-weight:bold;color:#222;transform:scaleX(0.95);transform-origin:0 0">Wireframe</div>
<div class="a" style="left:1374px;top:817px;font-size:12px;color:#e8e8e8;white-space:nowrap;transform:scaleX(0.92);transform-origin:0 0">9:49 AM</div>

<!-- webcam -->
<svg class="a" style="left:1491px;top:28px" width="377" height="282" viewBox="0 0 377 282">
 <defs>
  <clipPath id="camclip"><rect x="0" y="0" width="377" height="282" rx="3"/></clipPath>
  <filter id="bl"><feGaussianBlur stdDeviation="0.9"/></filter>
  <filter id="bl2"><feGaussianBlur stdDeviation="2.5"/></filter>
  <linearGradient id="pan1" x1="0" y1="0" x2="1" y2="0"><stop offset="0" stop-color="#d2d3d8"/><stop offset="0.6" stop-color="#d6d6da"/><stop offset="1" stop-color="#cfcfd3"/></linearGradient>
  <linearGradient id="ceil" x1="0" y1="0" x2="1" y2="0"><stop offset="0" stop-color="#6e605e"/><stop offset="0.5" stop-color="#5e5250"/><stop offset="1" stop-color="#6e6462"/></linearGradient>
  <radialGradient id="face" cx="0.5" cy="0.45" r="0.6"><stop offset="0" stop-color="#c0998a"/><stop offset="1" stop-color="#9e7a6c"/></radialGradient>
 </defs>
 <g clip-path="url(#camclip)" filter="url(#bl)">
  <rect width="377" height="282" fill="#7a6a62"/>
  <rect width="377" height="45" fill="url(#ceil)"/>
  <rect x="0" y="13" width="377" height="16" fill="#221e20"/>
  <rect x="198" y="0" width="19" height="46" fill="#1a1a1e"/>
  <rect x="0" y="0" width="7" height="282" fill="#1e1e22"/>
  <ellipse cx="116" cy="38" rx="18" ry="7" fill="#e4dccb"/>
  <ellipse cx="116" cy="37" rx="10" ry="3" fill="#fff8ea"/>
  <ellipse cx="241" cy="41" rx="17" ry="6.5" fill="#e4dccb"/>
  <ellipse cx="241" cy="40" rx="9" ry="3" fill="#fff8ea"/>
  <rect x="346" y="33" width="8" height="12" fill="#9a9aa0"/>
  <path d="M0,44 Q80,40 160,45 Q230,48 377,47 V128 H0 Z" fill="url(#pan1)"/>
  <rect x="210" y="46" width="1" height="82" fill="#c4c4c8"/>
  <rect x="310" y="48" width="1" height="80" fill="#c0c0c4"/>
  <rect x="0" y="128" width="377" height="16" fill="#161618"/>
  <rect x="0" y="144" width="377" height="84" fill="#d6d6da"/>
  <rect x="310" y="144" width="1" height="84" fill="#c4c4c8"/>
  <rect x="0" y="228" width="377" height="54" fill="#6e5048"/>
  <rect x="0" y="228" width="120" height="54" fill="#5a4a48"/>
  <rect x="0" y="248" width="377" height="14" fill="#18181a"/>
  <rect x="330" y="230" width="10" height="18" fill="#d8d8dc"/>
  <!-- person -->
  <path d="M110,282 C118,266 132,255 150,250 L150,282 Z" fill="#d8d8dc"/>
  <path d="M256,245 C282,250 302,264 312,282 L256,282 Z" fill="#dcdde2"/>
  <path d="M147,282 C145,250 145,214 151,188 C159,158 180,129 204,128 C229,129 245,150 252,184 C258,214 258,248 260,282 Z" fill="#1f1c1e"/>
  <path d="M252,200 C258,225 266,245 272,262 L262,262 Z" fill="#2a2628"/>
  <path d="M163,206 C162,178 178,158 198,157 C218,158 230,182 229,214 C228,242 214,261 195,262 C175,261 164,240 163,206 Z" fill="url(#face)"/>
  <path d="M206,156 C226,162 236,190 234,236 L244,236 C246,190 234,158 206,150 Z" fill="#1f1c1e"/>
  <path d="M170,282 C176,266 186,258 196,256 L214,258 C206,266 200,274 198,282 Z" fill="#1f1c1e"/>
  <path d="M176,282 C182,268 192,260 206,257 C216,258 216,268 208,276 L204,282 Z" fill="#b08878"/>
  <rect x="152" y="197" width="33" height="22" rx="6" fill="none" stroke="#cdc6c0" stroke-width="2"/>
  <rect x="188" y="199" width="42" height="23" rx="6" fill="none" stroke="#cdc6c0" stroke-width="2"/>
  <path d="M162,206 h14 M198,208 h16" stroke="#3e2e2a" stroke-width="2.4"/>
  <path d="M186,241 q9,3 18,0" stroke="#7a4e44" stroke-width="2" fill="none"/>
 </g>
</svg>
<!-- cacoo toolbar -->
<svg class="a" style="left:0;top:0" width="1904" height="150">
 <defs>
  <linearGradient id="bg1" x1="0" y1="0" x2="0" y2="1"><stop offset="0" stop-color="#ffffff"/><stop offset="1" stop-color="#e6eaee"/></linearGradient>
  <linearGradient id="gg" x1="0" y1="0" x2="0" y2="1"><stop offset="0" stop-color="#9dbb2a"/><stop offset="1" stop-color="#97b527"/></linearGradient>
  <linearGradient id="sg" x1="0" y1="0" x2="0" y2="1"><stop offset="0" stop-color="#6fb0f0"/><stop offset="1" stop-color="#4f94e0"/></linearGradient>
 </defs>
 <!-- cacoo logo -->
 <g fill="none" stroke="#fff" stroke-width="3.2" stroke-linecap="round">
  <path d="M54,123.5 A5.3,5.3 0 1 0 54,131.5"/>
  <circle cx="64" cy="127.5" r="5.2"/>
  <path d="M69.2,124 v8.5"/>
  <path d="M83.5,123.5 A5.3,5.3 0 1 0 83.5,131.5"/>
  <circle cx="94" cy="127.5" r="5.2"/>
  <circle cx="107.5" cy="127.5" r="5.2"/>
 </g>
 <polygon points="124,131.5 129,131.5 126.5,134" fill="#c9dbf2"/>
 <!-- separators -->
 <g fill="#1847b5">
  <rect x="141" y="117" width="2" height="18"/><rect x="198" y="117" width="2" height="18"/>
  <rect x="325" y="117" width="2" height="18"/><rect x="359" y="117" width="2" height="18"/>
  <rect x="538" y="117" width="2" height="18"/><rect x="619" y="117" width="2" height="18"/>
 </g>
 <g fill="url(#bg1)" stroke="#b9c9dc" stroke-width="1">
  <rect x="148.5" y="116.5" width="19" height="18.5" rx="2"/>
  <rect x="171.5" y="116.5" width="19" height="18.5" rx="2"/>
  <rect x="204.5" y="116.5" width="19" height="18.5" rx="2"/>
  <rect x="228.5" y="116.5" width="19" height="18.5" rx="2"/>
  <rect x="251.5" y="116.5" width="19" height="18.5" rx="2"/>
  <rect x="275.5" y="116.5" width="19" height="18.5" rx="2"/>
  <rect x="298.5" y="116.5" width="19" height="18.5" rx="2"/>
  <rect x="332.5" y="116.5" width="19" height="18.5" rx="2"/>
  <rect x="366.5" y="116.5" width="19" height="18.5" rx="2"/>
  <rect x="389.5" y="116.5" width="34" height="18.5" rx="2"/>
  <rect x="427.5" y="116.5" width="33" height="18.5" rx="2"/>
  <rect x="464.5" y="116.5" width="19" height="18.5" rx="2"/>
  <rect x="487.5" y="116.5" width="19" height="18.5" rx="2"/>
  <rect x="511.5" y="116.5" width="19" height="18.5" rx="2"/>
  <rect x="625.5" y="116.5" width="112" height="18.5" rx="2"/>
 </g>
 <g fill="#cfd5dc" stroke="#aebfd3" stroke-width="1">
  <rect x="545.5" y="116.5" width="19" height="18.5" rx="2"/>
  <rect x="568.5" y="116.5" width="19" height="18.5" rx="2"/>
  <rect x="591.5" y="116.5" width="19" height="18.5" rx="2"/>
 </g>
 <rect x="410" y="117" width="1" height="18" fill="#c9d3de"/>
 <rect x="446" y="117" width="1" height="18" fill="#c9d3de"/>
 <!-- undo -->
 <path d="M153,121 v5 h5" fill="none" stroke="#1d5fb8" stroke-width="2.2"/>
 <path d="M154,125.5 a6,6 0 0 1 8.5,1 a4,4 0 0 1 -1.5,5.5" fill="none" stroke="#1d5fb8" stroke-width="2.4"/>
 <!-- redo faded -->
 <path d="M185,121 v5 h-5" fill="none" stroke="#b8d0ea" stroke-width="2"/>
 <path d="M184,125.5 a6,6 0 0 0 -8.5,1 a4,4 0 0 0 1.5,5.5" fill="none" stroke="#b8d0ea" stroke-width="2.2"/>
 <!-- copy faded -->
 <rect x="208.5" y="120.5" width="8" height="10" fill="#f2f2f2" stroke="#bbb"/>
 <rect x="212.5" y="123.5" width="8" height="9" fill="#f2f2f2" stroke="#aab"/>
 <!-- paste faded -->
 <rect x="232.5" y="120.5" width="11" height="12" fill="#efe8d8" stroke="#d9ceb5"/>
 <rect x="235.5" y="124.5" width="6" height="7" fill="#f8f8f8" stroke="#ddd"/>
 <!-- cut -->
 <path d="M258,120 l6,8 M264,120 l-6,8" stroke="#888" stroke-width="1.5"/>
 <circle cx="257.5" cy="130.5" r="2.6" fill="none" stroke="#2060b0" stroke-width="1.8"/>
 <circle cx="264.5" cy="130.5" r="2.6" fill="none" stroke="#2060b0" stroke-width="1.8"/>
 <!-- group -->
 <rect x="279" y="120" width="8" height="9" fill="#7fb028"/>
 <rect x="282" y="124" width="9" height="9" fill="#6aa020"/>
 <path d="M285,120 v5 M282.5,123 l2.5,3 l2.5,-3" stroke="#1c4fa0" stroke-width="2" fill="none"/>
 <!-- ungroup -->
 <rect x="302" y="121" width="7" height="9" fill="#7fb028"/>
 <rect x="303" y="130" width="12" height="3" fill="#8a6a30"/>
 <rect x="306" y="126" width="7" height="5" fill="#9a7a40"/>
 <rect x="308" y="119" width="3" height="8" fill="#888"/>
 <!-- image -->
 <rect x="336" y="121" width="12" height="10" rx="2" fill="#8fbd2c"/>
 <rect x="339" y="124" width="6" height="4" fill="#c8e08a"/>
 <!-- text A -->
 <rect x="369.5" y="119.5" width="13" height="13" fill="none" stroke="#777"/>
 <text x="371" y="131" font-family="Liberation Serif" font-size="13" fill="#333">A</text>
 <!-- line -->
 <path d="M394,120 l11,11" stroke="#1f6fcf" stroke-width="1.8"/>
 <polygon points="413,123 421,123 417,128" fill="#1b4f9f"/>
 <!-- stencil -->
 <rect x="432" y="126" width="8" height="6" fill="#f6b640"/>
 <rect x="435" y="120" width="5" height="4" fill="#3c8ad8"/>
 <rect x="439" y="124" width="5" height="4" fill="#3c8ad8"/>
 <polygon points="450,123 458,123 454,128" fill="#1b4f9f"/>
 <!-- table -->
 <rect x="468.5" y="120.5" width="11" height="11" fill="#fafafa" stroke="#aaa"/>
 <path d="M468.5,124 h11 M468.5,128 h11 M472.3,120.5 v11 M476,120.5 v11" stroke="#aaa" stroke-width="0.8"/>
 <rect x="468.5" y="120.5" width="11" height="3" fill="#b9d67a"/>
 <!-- pencil -->
 <path d="M491,132 l4,-2 l8,-9 l-2,-2 l-9,8 z" fill="#6aa42a" stroke="#4a7a18" stroke-width="0.8"/>
 <!-- page -->
 <rect x="515.5" y="120.5" width="11" height="11" fill="#eef3fa" stroke="#8aa"/>
 <path d="M517,124 h5 M517,127 h8 M517,130 h8" stroke="#4a7ab8" stroke-width="1"/>
 <!-- 3 grey buttons -->
 <rect x="549" y="120" width="5" height="5" fill="#3c8ad8"/><rect x="556" y="120" width="6" height="5" fill="#8fbd2c"/>
 <circle cx="551.5" cy="130" r="2.5" fill="#6aa020"/><rect x="556" y="128" width="6" height="4" fill="#3c8ad8"/>
 <circle cx="575" cy="128" r="3" fill="#f0a040"/><rect x="577" y="120" width="7" height="5" fill="#f4f4f4"/>
 <path d="M573,131 a3,2 0 0 0 6,0" fill="#3c8ad8"/>
 <path d="M596,120 v12 M601,120 v12 M606,120 v12" stroke="#999" stroke-width="1"/>
 <rect x="594" y="127" width="4" height="2" fill="#4a90e0"/><rect x="599" y="122" width="4" height="2" fill="#4a90e0"/><rect x="604" y="127" width="4" height="2" fill="#4a90e0"/>
 <!-- zoom -->
 <circle cx="635" cy="124.5" r="4.4" fill="#e8f0fa" stroke="#1d5fb8" stroke-width="1.4"/>
 <path d="M633,124.5 h4" stroke="#1d5fb8" stroke-width="1.4"/>
 <path d="M638,127.5 l3,3" stroke="#1d5fb8" stroke-width="1.8"/>
 <rect x="648" y="124" width="67" height="4" rx="1" fill="#0f3f8f"/><rect x="649" y="124.6" width="65" height="1.6" fill="#1f5fc0"/>
 <rect x="685.5" y="120" width="7" height="12" rx="1.5" fill="#eaeaea" stroke="#9a9a9a" stroke-width="0.8"/>
 <circle cx="725.5" cy="124.5" r="4.4" fill="#e8f0fa" stroke="#1d5fb8" stroke-width="1.4"/>
 <path d="M723.5,124.5 h4 M725.5,122.5 v4" stroke="#1d5fb8" stroke-width="1.4"/>
 <path d="M728.5,127.5 l3,3" stroke="#1d5fb8" stroke-width="1.8"/>
 <!-- green buttons -->
 <g fill="url(#gg)" stroke="#6e8a1e" stroke-width="1">
  <rect x="1042.5" y="111" width="55" height="24.5" rx="1.5"/>
  <rect x="1101.5" y="111" width="67" height="24.5" rx="1.5"/>
  <rect x="1173.5" y="111" width="67" height="24.5" rx="1.5"/>
  <rect x="1244.5" y="111" width="78" height="24.5" rx="1.5"/>
 </g>
 <rect x="1330.5" y="116.5" width="108" height="19" rx="2" fill="url(#sg)" stroke="#3a7fcf"/>
 <rect x="1445" y="116.5" width="19" height="19" fill="#2e6fcc"/>
 <path d="M1450,121.5 l9,9 M1459,121.5 l-9,9" stroke="#fff" stroke-width="2"/>
 <!-- help icon -->
 <circle cx="1057" cy="123" r="6.5" fill="#3a86e0" stroke="#e8f2ff" stroke-width="1.3"/>
 <text x="1054" y="127" font-family="Liberation Sans" font-weight="bold" font-size="10" fill="#fff">?</text>
 <!-- export icon -->
 <rect x="1114" y="117" width="10" height="13" fill="#f4f4f4" stroke="#bbb" stroke-width="0.8"/>
 <rect x="1115" y="120" width="6" height="6" fill="#5aa0e0"/>
 <path d="M1109,127 h7" stroke="#2d6fcf" stroke-width="2.4"/>
 <!-- share icon -->
 <circle cx="1187" cy="121" r="3" fill="#f0a050"/><circle cx="1195" cy="120" r="3" fill="#e06040"/><circle cx="1193" cy="127" r="4" fill="#e86a44"/><circle cx="1199" cy="124" r="3" fill="#70a040"/>
 <!-- properties icon -->
 <rect x="1255" y="116" width="9" height="14" fill="#f4f4f4" stroke="#aaa" stroke-width="0.8"/>
 <rect x="1256" y="120" width="5" height="4" fill="#5aa0e0"/>
 <rect x="1260" y="124" width="6" height="7" fill="#999"/>
 <!-- save icon -->
 <rect x="1336" y="121" width="12" height="11" rx="1" fill="#6a6a6a"/>
 <rect x="1339" y="121" width="6" height="4" fill="#ddd"/>
 <path d="M1346,131 l6,-7" stroke="#f0b030" stroke-width="2.4"/>
</svg>
<div class="a" style="left:1070px;top:117px;font-size:10.5px;font-weight:bold;color:#2c3a0c;transform:scaleX(0.9);transform-origin:0 0">Help</div>
<div class="a" style="left:1134px;top:117px;font-size:10.5px;font-weight:bold;color:#2c3a0c;transform:scaleX(0.9);transform-origin:0 0">Export</div>
<div class="a" style="left:1209px;top:117px;font-size:10.5px;font-weight:bold;color:#2c3a0c;transform:scaleX(0.9);transform-origin:0 0">Share</div>
<div class="a" style="left:1272px;top:117px;font-size:10.5px;font-weight:bold;color:#2c3a0c;transform:scaleX(0.9);transform-origin:0 0">Properties</div>
<div class="a" style="left:1361px;top:118px;font-size:12.5px;color:#10325e;transform:scaleX(0.89);transform-origin:0 0">Save Diagram</div>
<svg class="a" style="left:1440px;top:543px" width="16" height="22"><path d="M1.5,1.5 L1.5,15.5 L5,12.2 L7.6,18 L10,17 L7.5,11.3 L12,11.3 Z" fill="#fff" stroke="#111" stroke-width="1"/></svg>
</div>
</body></html>
